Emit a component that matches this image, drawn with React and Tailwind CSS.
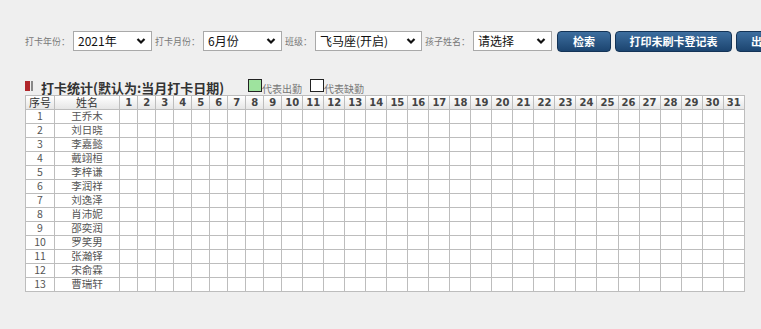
import React from 'react';

const names = ['王乔木', '刘日晓', '李嘉懿', '戴翊桓', '李梓谦', '李润祥', '刘逸泽', '肖沛妮', '邵奕润', '罗笑男', '张瀚铎', '宋俞霖', '曹瑞轩'];
const days = Array.from({ length: 31 }, (_, i) => i + 1);

const cjk = { fontFamily: '"Noto Sans CJK SC", "Liberation Sans", sans-serif' };

const Chevron = () => (
    <svg width="10" height="8" viewBox="0 0 10 8" className="shrink-0">
        <polyline points="1.5,2 5,5.5 8.5,2" fill="none" stroke="#111" strokeWidth="2.2" />
    </svg>
);

const FakeSelect = ({ value, width }) => (
    <div className={`flex shrink-0 items-center justify-between h-[20px] bg-white border border-[#a9a9a9] pl-[4px] pr-[5px] ${width}`}>
        <span className="text-[12px] text-[#111] leading-none whitespace-nowrap">{value}</span>
        <Chevron />
    </div>
);

const Label = ({ children }) => (
    <span className="shrink-0 text-[9px] text-[#777] mx-[3px] leading-none whitespace-nowrap">{children}</span>
);

const Button = ({ children, width }) => (
    <button className={`h-[21px] shrink-0 rounded-[4px] border border-[#143457] bg-gradient-to-b from-[#3d6e9f] to-[#1c4570] text-white text-[11px] font-bold leading-none overflow-hidden whitespace-nowrap ${width}`}>
        {children}
    </button>
);

export default function App() {
    return (
        <div className="w-[761px] h-[329px] overflow-hidden bg-[#efefef]" style={cjk}>
            <div className="flex items-center pt-[31px] pl-[22px] h-[51px] w-max">
                <Label>打卡年份：</Label>
                <FakeSelect value="2021年" width="w-[79px]" />
                <Label>打卡月份：</Label>
                <FakeSelect value="6月份" width="w-[79px]" />
                <Label>班级：</Label>
                <FakeSelect value="飞马座(开启)" width="w-[107px]" />
                <Label>孩子姓名：</Label>
                <FakeSelect value="请选择" width="w-[79px]" />
                <div className="flex shrink-0 gap-[4px] ml-[5px]">
                    <Button width="w-[54px]">检索</Button>
                    <Button width="w-[117px]">打印未刷卡登记表</Button>
                    <Button width="w-[80px] text-left pl-[14px]">出勤导出</Button>
                </div>
            </div>

            <div className="flex items-end mt-[26px] pl-[25px] h-[17px]">
                <div className="flex items-center mb-[3px] mr-[8px]">
                    <div className="w-[5px] h-[10px] bg-[#b0262a]" />
                    <div className="w-[2px] h-[10px] bg-[#888] ml-[1px]" />
                </div>
                <span className="text-[13px] font-bold text-[#333] leading-none whitespace-nowrap">打卡统计(默认为:当月打卡日期)</span>
                <div className="w-[14px] h-[13px] bg-[#9ee39e] border border-[#222] ml-[24px] mb-[2px]" />
                <span className="text-[10px] text-[#777] leading-none">代表出勤</span>
                <div className="w-[14px] h-[13px] bg-white border border-[#222] ml-[8px] mb-[2px]" />
                <span className="text-[10px] text-[#777] leading-none">代表缺勤</span>
            </div>

            <table className="ml-[25px] mt-[1px] border-collapse table-fixed w-[720px]">
                <colgroup>
                    <col className="w-[29px]" />
                    <col className="w-[65px]" />
                    {days.map((d) => (
                        <col key={d} className={d < 10 ? 'w-[18px]' : 'w-[21px]'} />
                    ))}
                </colgroup>
                <thead>
                    <tr className="h-[14px] bg-gradient-to-b from-white to-[#e4e4e4]">
                        <th className="border border-[#bdbdbd] text-[11px] font-normal text-[#333] leading-none p-0">序号</th>
                        <th className="border border-[#bdbdbd] text-[11px] font-normal text-[#333] leading-none p-0">姓名</th>
                        {days.map((d) => (
                            <th
                                key={d}
                                className="border border-[#bdbdbd] text-[10px] font-bold text-[#444] leading-none p-0"
                                style={{ fontFamily: '"DejaVu Sans", sans-serif' }}
                            >
                                {d}
                            </th>
                        ))}
                    </tr>
                </thead>
                <tbody>
                    {names.map((n, i) => (
                        <tr key={n} className="h-[14px] bg-white">
                            <td className="border border-[#bdbdbd] text-[10.5px] text-[#555] text-center leading-none p-0">{i + 1}</td>
                            <td className="border border-[#bdbdbd] text-[10.5px] text-[#555] text-center leading-none p-0">{n}</td>
                            {days.map((d) => (
                                <td key={d} className="border border-[#bdbdbd] p-0" />
                            ))}
                        </tr>
                    ))}
                </tbody>
            </table>
        </div>
    );
}
